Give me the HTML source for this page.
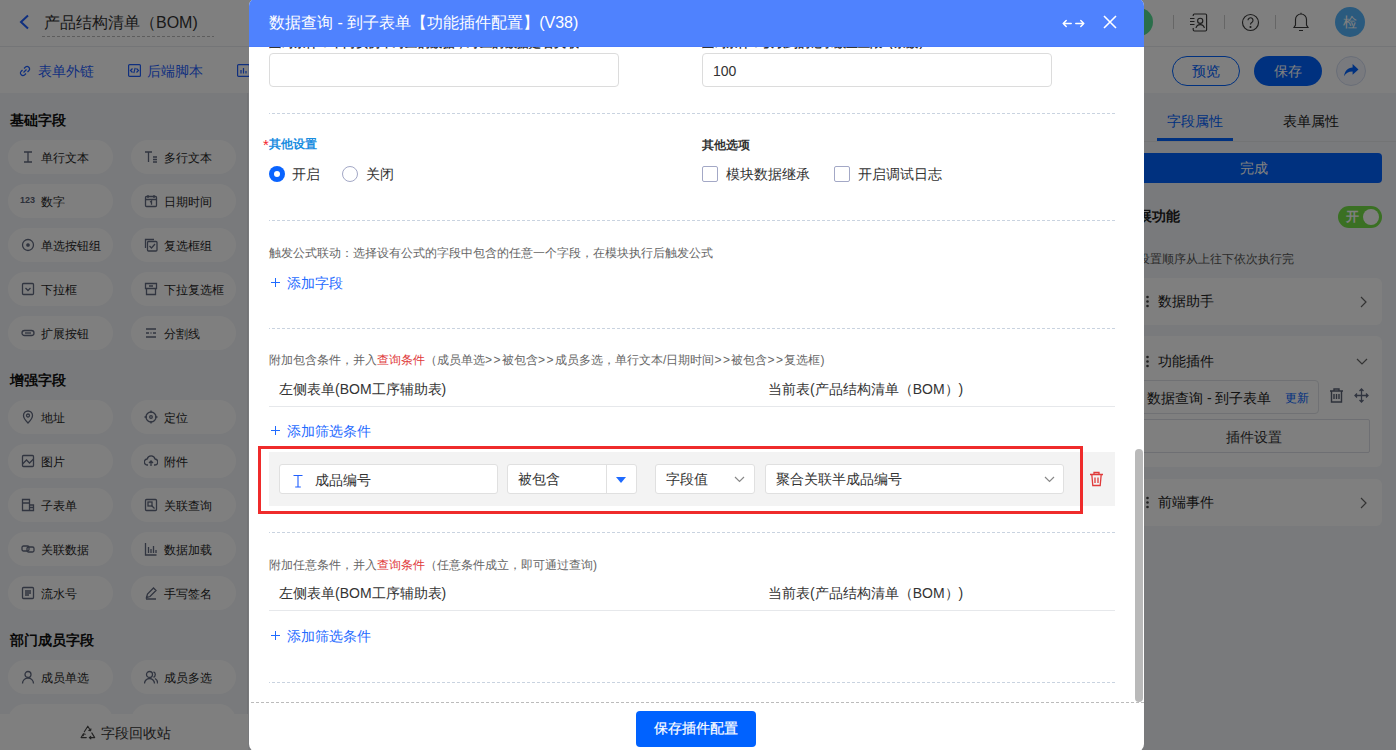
<!DOCTYPE html>
<html><head><meta charset="utf-8">
<style>
*{box-sizing:border-box;margin:0;padding:0}
html,body{width:1396px;height:750px;overflow:hidden;background:#fff;font-family:"Liberation Sans",sans-serif;color:#333}
.a{position:absolute}
.t{position:absolute;white-space:nowrap;line-height:1}
/* background page */
#page{position:absolute;left:0;top:0;width:1396px;height:750px;background:#f3f5f8}
#hdr{left:0;top:0;width:1396px;height:47px;background:#fff;border-bottom:1px solid #e8eaee}
#tb{left:0;top:47px;width:1396px;height:46px;background:#fff}
#side{left:0;top:93px;width:248px;height:657px;background:#f3f5f8;border-right:1px solid #e4e6ea}
.pill{position:absolute;width:105px;height:34px;border-radius:17px;background:#fff}
.pill .t{font-size:12px;color:#262626;top:12px;left:33px}
.pill svg{position:absolute;left:12px;top:10px}
.sh{position:absolute;left:10px;font-size:14px;font-weight:bold;color:#111;line-height:1}
#rp{left:1144px;top:93px;width:252px;height:657px;background:#f3f5f8}
.card{position:absolute;left:1130px;width:252px;background:#fff;border-radius:6px}
#overlay{position:absolute;left:0;top:0;width:1396px;height:750px;background:rgba(0,0,0,.5)}
/* modal */
#modal{position:absolute;left:249px;top:0;width:895px;height:750px;background:#fff;clip-path:inset(-2px 0 -2px 0 round 8px)}
#mh{position:absolute;left:0;top:0;width:895px;height:47px;background:#4f82fe;border-bottom:1px solid #4a7cfc}
.dash{position:absolute;height:1px;background-image:linear-gradient(to right,#c9d3e0 0,#c9d3e0 3px,transparent 3px);background-size:5px 1px;background-position:3px 0}
.inp{position:absolute;border:1px solid #dcdcdc;border-radius:4px;background:#fff}
.lbl{position:absolute;font-size:12px;color:#666;line-height:1;white-space:nowrap}
.blue{color:#1f6bff}
.k{font-size:14px;color:#333}
</style></head><body>
<div id="page">
  <div id="hdr" class="a">
    <svg class="a" style="left:18px;top:14px" width="12" height="16" viewBox="0 0 12 16"><path d="M10 1.5L3 8l7 6.5" stroke="#1f5fff" stroke-width="2" fill="none"/></svg>
    <div class="t" style="left:44px;top:15px;font-size:16px;color:#333">产品结构清单（BOM)</div>
    <div class="a" style="left:42px;top:36px;width:172px;height:1px;background-image:linear-gradient(to right,#bbb 0,#bbb 3px,transparent 3px);background-size:5px 1px"></div>
    <div class="a" style="left:1125px;top:8px;width:28px;height:28px;border-radius:50%;background:#54dc94"></div>
    <div class="a" style="left:1173px;top:15px;width:1px;height:14px;background:#ccc"></div>
    <div class="a" style="left:1224px;top:15px;width:1px;height:14px;background:#ccc"></div>
    <div class="a" style="left:1275px;top:15px;width:1px;height:14px;background:#ccc"></div>
    <svg class="a" style="left:1189px;top:13px" width="19" height="19" viewBox="0 0 19 19" fill="none" stroke="#3a3a3a" stroke-width="1.15"><path d="M4.2 3V2.2a1.2 1.2 0 011.2-1.2h11a1.2 1.2 0 011.2 1.2v14.6a1.2 1.2 0 01-1.2 1.2h-11a1.2 1.2 0 01-1.2-1.2V15"/><circle cx="11.2" cy="7.8" r="2.6"/><path d="M7 15a4.3 4.3 0 018.4 0M1 5.5h4.5M1 8.5h4.5M1 11.5h4.5"/></svg>
    <svg class="a" style="left:1241px;top:13px" width="19" height="19" viewBox="0 0 19 19" fill="none" stroke="#3a3a3a" stroke-width="1.15"><circle cx="9.5" cy="9.5" r="8"/><path d="M7 7.3a2.5 2.5 0 114 2c-.9.6-1.5 1-1.5 2.2"/><circle cx="9.5" cy="14" r=".5" fill="#333"/></svg>
    <svg class="a" style="left:1292px;top:12px" width="18" height="21" viewBox="0 0 18 21" fill="none" stroke="#3a3a3a" stroke-width="1.15"><path d="M9 2a5.5 5.5 0 00-5.5 5.5V13L2 15.5h14L14.5 13V7.5A5.5 5.5 0 009 2zM9 .8V2M7 18.5h4"/></svg>
    <div class="a" style="left:1335px;top:7px;width:30px;height:30px;border-radius:50%;background:#54b4fc"><div class="t" style="left:8px;top:8px;font-size:14px;color:#fff">检</div></div>
  </div>
  <div id="tb" class="a">
    <svg class="a" style="left:19px;top:18px" width="12" height="12" viewBox="0 0 12 12" fill="none" stroke="#1f5fff" stroke-width="1.2"><path d="M5 3.5l1.5-1.5a2.5 2.5 0 013.5 3.5L8.5 7M7 8.5L5.5 10A2.5 2.5 0 012 6.5L3.5 5M4.5 7.5l3-3"/></svg>
    <div class="t" style="left:38px;top:17px;font-size:14px;color:#1f5fff">表单外链</div>
    <svg class="a" style="left:128px;top:17px" width="13" height="13" viewBox="0 0 13 13" fill="none" stroke="#1f5fff" stroke-width="1.2"><rect x="0.6" y="0.6" width="11.8" height="11.8" rx="1"/><path d="M4.5 4.5L2.5 6.5l2 2M8.5 4.5l2 2-2 2M7.2 3.8L5.8 9.2"/></svg>
    <div class="t" style="left:147px;top:17px;font-size:14px;color:#1f5fff">后端脚本</div>
    <svg class="a" style="left:237px;top:17px" width="13" height="13" viewBox="0 0 13 13" fill="none" stroke="#1f5fff" stroke-width="1.2"><rect x="0.6" y="0.6" width="11.8" height="11.8" rx="1"/><path d="M4 9.5V6M6.5 9.5V4M9 9.5V7"/></svg>
    <div class="a" style="left:1172px;top:9px;width:68px;height:30px;border-radius:15px;border:1.5px solid #0062ff"><div class="t" style="left:19px;top:7px;font-size:14px;color:#0062ff">预览</div></div>
    <div class="a" style="left:1254px;top:9px;width:68px;height:30px;border-radius:15px;background:#0062ff"><div class="t" style="left:20px;top:8px;font-size:14px;color:#fff">保存</div></div>
    <div class="a" style="left:1336px;top:9px;width:30px;height:30px;border-radius:50%;border:1px solid #d3dcf0;background:#f2f5fc">
      <svg class="a" style="left:6px;top:6px" width="16" height="15" viewBox="0 0 15 14"><path d="M9 1l5.5 5L9 11V8C5 8 2.5 9.5 1 12.5 1.5 7.5 4.5 4.5 9 4.2z" fill="#0062ff"/></svg>
    </div>
  </div>
  <div id="side" class="a">
    <div class="sh" style="top:20px">基础字段</div>
    <div id="sidepills" class="a" style="left:0;top:-93px"><div class="pill" style="left:8px;top:140px"><svg width="14" height="14" viewBox="0 0 14 14" style="position:absolute;left:13px;top:10px" fill="none" stroke="#626a80" stroke-width="1.3"><path d="M3 2h8M3 12h8M7 2v10"/></svg><div class="t">单行文本</div></div>
<div class="pill" style="left:131px;top:140px"><svg width="14" height="14" viewBox="0 0 14 14" style="position:absolute;left:13px;top:10px" fill="none" stroke="#626a80" stroke-width="1.3"><path d="M1 2h7M4.5 2v10M9 7h4M9 9.5h4M9 12h4"/></svg><div class="t">多行文本</div></div>
<div class="pill" style="left:8px;top:184px"><div class="t" style="left:12px;top:12px;font-size:9px;font-weight:bold;color:#5b6275">123</div><div class="t">数字</div></div>
<div class="pill" style="left:131px;top:184px"><svg width="14" height="14" viewBox="0 0 14 14" style="position:absolute;left:13px;top:10px" fill="none" stroke="#626a80" stroke-width="1.3"><rect x="1.5" y="2.5" width="11" height="10" rx="1"/><path d="M1.5 5.5h11M4 1v3M10 1v3M6 8l1.5-.8v3.5"/></svg><div class="t">日期时间</div></div>
<div class="pill" style="left:8px;top:228px"><svg width="14" height="14" viewBox="0 0 14 14" style="position:absolute;left:13px;top:10px" fill="none" stroke="#626a80" stroke-width="1.3"><circle cx="7" cy="7" r="5.5"/><circle cx="7" cy="7" r="1.2" fill="#5b6275"/></svg><div class="t">单选按钮组</div></div>
<div class="pill" style="left:131px;top:228px"><svg width="14" height="14" viewBox="0 0 14 14" style="position:absolute;left:13px;top:10px" fill="none" stroke="#626a80" stroke-width="1.3"><path d="M1.5 10V1.5H10"/><rect x="3.5" y="3.5" width="9.5" height="9.5" rx="1"/><path d="M5.5 8l2 2 3.5-4"/></svg><div class="t">复选框组</div></div>
<div class="pill" style="left:8px;top:272px"><svg width="14" height="14" viewBox="0 0 14 14" style="position:absolute;left:13px;top:10px" fill="none" stroke="#626a80" stroke-width="1.3"><rect x="1.5" y="1.5" width="11" height="11" rx="1"/><path d="M4.5 6l2.5 2.5L9.5 6"/></svg><div class="t">下拉框</div></div>
<div class="pill" style="left:131px;top:272px"><svg width="14" height="14" viewBox="0 0 14 14" style="position:absolute;left:13px;top:10px" fill="none" stroke="#626a80" stroke-width="1.3"><path d="M1.5 1.5h11v5h-11zM2.5 6.5v6h9v-6M5 4h4"/></svg><div class="t">下拉复选框</div></div>
<div class="pill" style="left:8px;top:316px"><svg width="14" height="14" viewBox="0 0 14 14" style="position:absolute;left:13px;top:10px" fill="none" stroke="#626a80" stroke-width="1.3"><rect x="1" y="4.5" width="12" height="5" rx="2.5"/><path d="M4 7h6"/></svg><div class="t">扩展按钮</div></div>
<div class="pill" style="left:131px;top:316px"><svg width="14" height="14" viewBox="0 0 14 14" style="position:absolute;left:13px;top:10px" fill="none" stroke="#626a80" stroke-width="1.3"><path d="M2 3h10M2 7h3M6.5 7h1M9 7h3M2 11h10"/></svg><div class="t">分割线</div></div>
<div class="pill" style="left:8px;top:400px"><svg width="14" height="14" viewBox="0 0 14 14" style="position:absolute;left:13px;top:10px" fill="none" stroke="#626a80" stroke-width="1.3"><path d="M7 13s-4.5-4.5-4.5-7.5a4.5 4.5 0 019 0C11.5 8.5 7 13 7 13z"/><circle cx="7" cy="5.5" r="1.5"/></svg><div class="t">地址</div></div>
<div class="pill" style="left:131px;top:400px"><svg width="14" height="14" viewBox="0 0 14 14" style="position:absolute;left:13px;top:10px" fill="none" stroke="#626a80" stroke-width="1.3"><circle cx="7" cy="7" r="5"/><circle cx="7" cy="7" r="1.3"/><path d="M7 0.5v2.5M7 11v2.5M0.5 7h2.5M11 7h2.5"/></svg><div class="t">定位</div></div>
<div class="pill" style="left:8px;top:444px"><svg width="14" height="14" viewBox="0 0 14 14" style="position:absolute;left:13px;top:10px" fill="none" stroke="#626a80" stroke-width="1.3"><rect x="1.5" y="1.5" width="11" height="11" rx="1"/><path d="M1.5 10l4-4 3 3 4-4"/></svg><div class="t">图片</div></div>
<div class="pill" style="left:131px;top:444px"><svg width="14" height="14" viewBox="0 0 14 14" style="position:absolute;left:13px;top:10px" fill="none" stroke="#626a80" stroke-width="1.3"><path d="M4 11H3.5a3 3 0 01-.3-6A4 4 0 0111 5a3 3 0 01-.5 6H10M7 7v5M5 9l2-2 2 2"/></svg><div class="t">附件</div></div>
<div class="pill" style="left:8px;top:488px"><svg width="14" height="14" viewBox="0 0 14 14" style="position:absolute;left:13px;top:10px" fill="none" stroke="#626a80" stroke-width="1.3"><path d="M1.5 1.5h7v11h-7zM1.5 5h7M8.5 7h4v5.5h-4M8.5 9.5h4"/></svg><div class="t">子表单</div></div>
<div class="pill" style="left:131px;top:488px"><svg width="14" height="14" viewBox="0 0 14 14" style="position:absolute;left:13px;top:10px" fill="none" stroke="#626a80" stroke-width="1.3"><rect x="1.5" y="1.5" width="11" height="11" rx="1"/><rect x="4" y="4" width="4" height="4"/><path d="M7.5 7.5l3 3"/></svg><div class="t">关联查询</div></div>
<div class="pill" style="left:8px;top:532px"><svg width="14" height="14" viewBox="0 0 14 14" style="position:absolute;left:13px;top:10px" fill="none" stroke="#626a80" stroke-width="1.3"><rect x="1" y="4" width="7" height="5" rx="1.5"/><rect x="6" y="5" width="7" height="5" rx="1.5"/></svg><div class="t">关联数据</div></div>
<div class="pill" style="left:131px;top:532px"><svg width="14" height="14" viewBox="0 0 14 14" style="position:absolute;left:13px;top:10px" fill="none" stroke="#626a80" stroke-width="1.3"><path d="M1.5 1v12h11M4.5 5v6M7 7v4M9.5 4v7M12 8v3"/></svg><div class="t">数据加载</div></div>
<div class="pill" style="left:8px;top:576px"><svg width="14" height="14" viewBox="0 0 14 14" style="position:absolute;left:13px;top:10px" fill="none" stroke="#626a80" stroke-width="1.3"><rect x="1.5" y="1.5" width="11" height="11" rx="1"/><path d="M4 5h6M4 7h6M4 9h4"/></svg><div class="t">流水号</div></div>
<div class="pill" style="left:131px;top:576px"><svg width="14" height="14" viewBox="0 0 14 14" style="position:absolute;left:13px;top:10px" fill="none" stroke="#626a80" stroke-width="1.3"><path d="M2.5 11.5l1-3.5 6-6 2.5 2.5-6 6zM2 13h10"/></svg><div class="t">手写签名</div></div>
<div class="pill" style="left:8px;top:660px"><svg width="14" height="14" viewBox="0 0 14 14" style="position:absolute;left:13px;top:10px" fill="none" stroke="#626a80" stroke-width="1.3"><circle cx="7" cy="4.5" r="3"/><path d="M1.5 13.5a5.5 5.5 0 0111 0"/></svg><div class="t">成员单选</div></div>
<div class="pill" style="left:131px;top:660px"><svg width="14" height="14" viewBox="0 0 14 14" style="position:absolute;left:13px;top:10px" fill="none" stroke="#626a80" stroke-width="1.3"><circle cx="5.5" cy="4.5" r="3"/><path d="M0.5 13.5a5 5 0 0110 0M9.5 1.8a3 3 0 010 5.5M11 8.5a5 5 0 012.5 5"/></svg><div class="t">成员多选</div></div>
<div class="pill" style="left:8px;top:704px"><div class="t">部门单选</div></div>
<div class="pill" style="left:131px;top:704px"><div class="t">部门多选</div></div>
</div>
    <div class="sh" style="top:280px">增强字段</div>
    <div class="sh" style="top:540px">部门成员字段</div>
    <div class="a" style="left:0;top:621px;width:248px;height:36px;background:#fff">
      <svg class="a" style="left:80px;top:11px" width="16" height="15" viewBox="0 0 16 15" fill="none" stroke="#444" stroke-width="1.1" stroke-linejoin="round" stroke-linecap="round"><path d="M4.3 6.8L7.8 1.2 10.6 5.8M10.6 5.8l.3-1.9M10.6 5.8l-1.8-.4M11.8 7.9l2.9 4.7H9.3M9.3 12.6l1.5-1.2M9.3 12.6l1.5 1.2M6.3 12.6H1.1L3.4 8.7M3.4 8.7l-.1 1.9M3.4 8.7l1.8.6"/></svg>
      <div class="t" style="left:101px;top:12px;font-size:14px;color:#333">字段回收站</div>
    </div>
  </div>
  <div id="rp" class="a">
    <div class="t" style="left:23px;top:21px;font-size:14px;color:#0062ff">字段属性</div>
    <div class="t" style="left:139px;top:21px;font-size:14px;color:#222">表单属性</div>
    <div class="a" style="left:13px;top:45px;width:76px;height:3px;background:#0062ff"></div>
    <div class="a" style="left:0;top:48px;width:252px;height:1px;background:#e6e8eb"></div>
    <div class="a" style="left:-14px;top:60px;width:252px;height:30px;border-radius:4px;background:#0062ff"><div class="t" style="left:110px;top:8px;font-size:14px;color:#fff">完成</div></div>
    <div class="t" style="left:-20px;top:116px;font-size:14px;font-weight:bold;color:#222">扩展功能</div>
    <div class="a" style="left:194px;top:113px;width:44px;height:22px;border-radius:11px;background:#74e046"><div class="t" style="left:8px;top:4px;font-size:13px;color:#fff;font-weight:bold">开</div><div class="a" style="left:25px;top:3px;width:16px;height:16px;border-radius:50%;background:#fff"></div></div>
    <div class="t" style="left:-6px;top:160px;font-size:12px;color:#555">设置顺序从上往下依次执行完</div>
    <div class="a" style="left:-14px;top:185px;width:252px;height:47px;border-radius:6px;background:#fff">
      <svg class="a" style="left:16px;top:17px" width="3" height="13" viewBox="0 0 3 13"><circle cx="1.5" cy="2" r="1.3" fill="#444"/><circle cx="1.5" cy="6.5" r="1.3" fill="#444"/><circle cx="1.5" cy="11" r="1.3" fill="#444"/></svg>
      <div class="t" style="left:28px;top:16px;font-size:14px;color:#222">数据助手</div>
      <svg class="a" style="left:230px;top:18px" width="7" height="12" viewBox="0 0 7 12"><path d="M1 1l5 5-5 5" stroke="#666" stroke-width="1.2" fill="none"/></svg>
    </div>
    <div class="a" style="left:-14px;top:243px;width:252px;height:131px;border-radius:6px;background:#fff">
      <svg class="a" style="left:16px;top:19px" width="3" height="13" viewBox="0 0 3 13"><circle cx="1.5" cy="2" r="1.3" fill="#444"/><circle cx="1.5" cy="6.5" r="1.3" fill="#444"/><circle cx="1.5" cy="11" r="1.3" fill="#444"/></svg>
      <div class="t" style="left:28px;top:18px;font-size:14px;color:#222">功能插件</div>
      <svg class="a" style="left:226px;top:22px" width="12" height="7" viewBox="0 0 12 7"><path d="M1 1l5 5 5-5" stroke="#666" stroke-width="1.2" fill="none"/></svg>
      <div class="a" style="left:0;top:44px;width:189px;height:34px;border:1px solid #e0e3e8;border-radius:4px">
        <div class="t" style="left:16px;top:10px;font-size:14px;color:#222">数据查询 - 到子表单</div>
        <div class="t" style="left:154px;top:11px;font-size:12px;color:#0062ff">更新</div>
      </div>
      <svg class="a" style="left:199px;top:52px" width="15" height="15" viewBox="0 0 15 15" fill="none" stroke="#5b6275" stroke-width="1.4"><path d="M1 3h13M5 3V1h5v2M2.5 3h10v11h-10zM5 6v5M7.5 6v5M10 6v5"/></svg>
      <svg class="a" style="left:224px;top:52px" width="15" height="15" viewBox="0 0 15 15" fill="none" stroke="#626a80" stroke-width="1.3"><path d="M7.5 1v13M1 7.5h13M5.5 3l2-2 2 2M5.5 12l2 2 2-2M3 5.5l-2 2 2 2M12 5.5l2 2-2 2"/></svg>
      <div class="a" style="left:0;top:83px;width:240px;height:34px;border:1px solid #dcdfe6;border-radius:2px"><div class="t" style="left:95px;top:10px;font-size:14px;color:#333">插件设置</div></div>
    </div>
    <div class="a" style="left:-14px;top:386px;width:252px;height:47px;border-radius:6px;background:#fff">
      <svg class="a" style="left:16px;top:17px" width="3" height="13" viewBox="0 0 3 13"><circle cx="1.5" cy="2" r="1.3" fill="#444"/><circle cx="1.5" cy="6.5" r="1.3" fill="#444"/><circle cx="1.5" cy="11" r="1.3" fill="#444"/></svg>
      <div class="t" style="left:28px;top:16px;font-size:14px;color:#222">前端事件</div>
      <svg class="a" style="left:230px;top:18px" width="7" height="12" viewBox="0 0 7 12"><path d="M1 1l5 5-5 5" stroke="#666" stroke-width="1.2" fill="none"/></svg>
    </div>
  </div>
</div>
<div id="overlay"></div>
<div id="modal">
  <div id="mh">
    <div class="t" style="left:20px;top:15px;font-size:16px;color:#fff">数据查询 - 到子表单【功能插件配置】(V38)</div>
    <svg class="a" style="left:813px;top:19px" width="23" height="9" viewBox="0 0 23 9"><path d="M1.2 4.5h8M1.2 4.5l3-3M1.2 4.5l3 3M13.8 4.5h8M21.8 4.5l-3-3M21.8 4.5l-3 3" stroke="#fff" stroke-width="1.5" fill="none" stroke-linecap="round"/></svg>
    <svg class="a" style="left:854px;top:15px" width="14" height="14" viewBox="0 0 14 14"><path d="M1 1L13 13M13 1L1 13" stroke="#fff" stroke-width="1.6" fill="none"/></svg>
  </div>
  
  <div class="t" style="left:20px;top:37px;font-size:12px;font-weight:bold;letter-spacing:0.4px;color:#333;clip-path:inset(10px 0 0 0)">查询条件：不同实例中对应的数据，对应的数据是否关联</div>
  <div class="t" style="left:453px;top:37px;font-size:12px;font-weight:bold;color:#333;clip-path:inset(10px 0 0 0)">查询条件：获取到的记录数量上限（条数）</div>
  <div class="inp" style="left:20px;top:53px;width:350px;height:34px"></div>
  <div class="inp" style="left:453px;top:53px;width:350px;height:34px"><div class="t" style="left:10px;top:10px;font-size:14px;color:#333">100</div></div>
  <div class="dash" style="left:20px;top:113px;width:846px"></div>

  <div class="t" style="left:14px;top:137px;font-size:15px;color:#f5222d">*</div><div class="t" style="left:20px;top:138px;font-size:12px;font-weight:bold;color:#1a8ddf">其他设置</div>
  <div class="a" style="left:20px;top:166px;width:16px;height:16px;border-radius:50%;background:#0a64ff"><div class="a" style="left:5px;top:5px;width:6px;height:6px;border-radius:50%;background:#fff"></div></div>
  <div class="t k" style="left:43px;top:167px">开启</div>
  <div class="a" style="left:93px;top:166px;width:16px;height:16px;border-radius:50%;border:1px solid #a3a8c6;background:#fff"></div>
  <div class="t k" style="left:117px;top:167px">关闭</div>

  <div class="t" style="left:453px;top:139px;font-size:12px;font-weight:bold;color:#333">其他选项</div>
  <div class="a" style="left:453px;top:166px;width:16px;height:16px;border:1px solid #a3a8c6;border-radius:2px;background:#fff"></div>
  <div class="t k" style="left:477px;top:167px">模块数据继承</div>
  <div class="a" style="left:585px;top:166px;width:16px;height:16px;border:1px solid #a3a8c6;border-radius:2px;background:#fff"></div>
  <div class="t k" style="left:609px;top:167px">开启调试日志</div>
  <div class="dash" style="left:20px;top:220px;width:846px"></div>

  <div class="lbl" style="left:20px;top:247px">触发公式联动：选择设有公式的字段中包含的任意一个字段，在模块执行后触发公式</div>
  <div class="t blue" style="left:20px;top:276px;font-size:14px"><svg style="display:inline-block;vertical-align:top;margin:2px 7px 0 2px" width="9" height="9" viewBox="0 0 9 9"><path d="M4.5 0v9M0 4.5h9" stroke="#1f6bff" stroke-width="1"/></svg>添加字段</div>
  <div class="dash" style="left:20px;top:328px;width:846px"></div>

  <div class="lbl" style="left:20px;top:354px">附加包含条件，并入<span style="color:#e03a3a">查询条件</span>（成员单选<span style="letter-spacing:1.5px">&gt;&gt;</span>被包含<span style="letter-spacing:1.5px">&gt;&gt;</span>成员多选，单行文本/日期时间<span style="letter-spacing:1.5px">&gt;&gt;</span>被包含<span style="letter-spacing:1.5px">&gt;&gt;</span>复选框)</div>
  <div class="t k" style="left:30px;top:382px">左侧表单(BOM工序辅助表)</div>
  <div class="t k" style="left:519px;top:382px">当前表(产品结构清单（BOM）)</div>
  <div class="a" style="left:20px;top:406px;width:846px;height:1px;background:#e6e8eb"></div>
  <div class="t blue" style="left:20px;top:424px;font-size:14px"><svg style="display:inline-block;vertical-align:top;margin:2px 7px 0 2px" width="9" height="9" viewBox="0 0 9 9"><path d="M4.5 0v9M0 4.5h9" stroke="#1f6bff" stroke-width="1"/></svg>添加筛选条件</div>

  <div class="a" style="left:20px;top:452px;width:846px;height:54px;background:#f3f3f3"></div>
  <div class="inp" style="left:30px;top:464px;width:219px;height:30px;border-radius:3px;border-color:#e0e0e0">
    <svg class="a" style="left:13px;top:9px" width="10" height="14" viewBox="0 0 10 14" fill="none" stroke="#1f5fff" stroke-width="1.1"><path d="M0.5 1.5h9M5 1.5v11.5M2.2 13h5.6"/></svg>
    <div class="t k" style="left:35px;top:8px">成品编号</div>
  </div>
  <div class="inp" style="left:258px;top:464px;width:130px;height:30px;border-radius:3px;border-color:#e0e0e0">
    <div class="t k" style="left:10px;top:7px">被包含</div>
    <div class="a" style="left:98px;top:0;width:1px;height:28px;background:#e0e0e0"></div>
    <svg class="a" style="left:108px;top:12px" width="10" height="6" viewBox="0 0 10 6"><path d="M0 0h10L5 6z" fill="#1f6bff"/></svg>
  </div>
  <div class="inp" style="left:406px;top:464px;width:100px;height:30px;border-radius:3px;border-color:#e0e0e0">
    <div class="t k" style="left:10px;top:7px">字段值</div>
    <svg class="a" style="left:78px;top:11px" width="11" height="7" viewBox="0 0 11 7"><path d="M1 1l4.5 4.5L10 1" stroke="#888" stroke-width="1.2" fill="none"/></svg>
  </div>
  <div class="inp" style="left:516px;top:464px;width:299px;height:30px;border-radius:3px;border-color:#e0e0e0">
    <div class="t k" style="left:10px;top:7px">聚合关联半成品编号</div>
    <svg class="a" style="left:278px;top:11px" width="11" height="7" viewBox="0 0 11 7"><path d="M1 1l4.5 4.5L10 1" stroke="#888" stroke-width="1.2" fill="none"/></svg>
  </div>
  <svg class="a" style="left:840px;top:471px" width="15" height="16" viewBox="0 0 15 16"><path d="M1 3.5h13M5 3.5V1.5h5v2M2.8 3.5l1 11h7.4l1-11M6 6.5v5.5M9 6.5v5.5" stroke="#e03a3a" stroke-width="1.3" fill="none"/></svg>
  <div class="a" style="left:9px;top:446px;width:825px;height:68px;border:3px solid #ef2b2b"></div>
  <div class="dash" style="left:20px;top:532px;width:846px"></div>

  <div class="lbl" style="left:20px;top:559px">附加任意条件，并入<span style="color:#e03a3a">查询条件</span>（任意条件成立，即可通过查询)</div>
  <div class="t k" style="left:30px;top:586px">左侧表单(BOM工序辅助表)</div>
  <div class="t k" style="left:519px;top:586px">当前表(产品结构清单（BOM）)</div>
  <div class="a" style="left:20px;top:610px;width:846px;height:1px;background:#e6e8eb"></div>
  <div class="t blue" style="left:20px;top:629px;font-size:14px"><svg style="display:inline-block;vertical-align:top;margin:2px 7px 0 2px" width="9" height="9" viewBox="0 0 9 9"><path d="M4.5 0v9M0 4.5h9" stroke="#1f6bff" stroke-width="1"/></svg>添加筛选条件</div>
  <div class="dash" style="left:20px;top:682px;width:846px"></div>

  <div class="a" style="left:886px;top:449px;width:8px;height:253px;border-radius:4px;background:#b9b9b9"></div>
  <div class="a" style="left:0;top:702px;width:895px;height:1px;background-image:linear-gradient(to right,#bbb 0,#bbb 3px,transparent 3px);background-size:5px 1px;background-position:2px 0"></div>
  <div class="a" style="left:387px;top:711px;width:120px;height:36px;border-radius:4px;background:#0062ff">
    <div class="t" style="left:18px;top:10px;font-size:14px;color:#fff;-webkit-text-stroke:0.2px #fff">保存插件配置</div>
  </div>
</div>
</body></html>
